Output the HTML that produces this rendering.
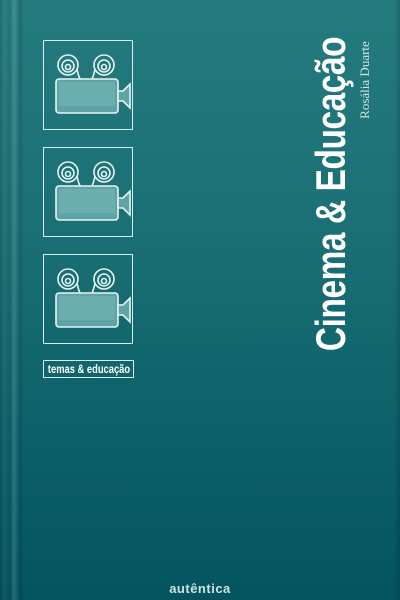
<!DOCTYPE html>
<html><head><style>
html,body{margin:0;padding:0}
body{width:400px;height:600px;position:relative;overflow:hidden;
background:linear-gradient(180deg,#247b7e 0%,#1a6f74 40%,#0b5f68 75%,#03545f 100%);
font-family:"Liberation Sans",sans-serif}
.spine{position:absolute;top:0;bottom:0;left:0;width:24px;
background:linear-gradient(90deg,rgba(0,0,0,.12) 0,rgba(255,255,255,.04) 4px,rgba(0,0,0,.05) 10px,rgba(255,255,255,.14) 14px,rgba(255,255,255,.05) 17px,rgba(0,0,0,.12) 20px,rgba(0,0,0,0) 24px)}
.redge{position:absolute;top:0;bottom:0;right:0;width:6px;background:linear-gradient(90deg,rgba(0,0,0,0),rgba(0,0,0,.15))}
.box{position:absolute;left:43px;width:88px;height:88px;border:1.5px solid #d8eeee}
.box svg{position:absolute;left:0;top:0}
.label{position:absolute;left:43px;top:360px;width:89px;height:16px;border:1.5px solid #d8eeee;}
.label span{position:absolute;left:50%;top:0;transform:translateX(-50%) scaleX(0.78);white-space:nowrap;color:#fff;font-weight:bold;font-size:12px;line-height:16px}
.title{position:absolute;left:331px;top:194px;transform:translate(-50%,-50%) rotate(-90deg) scaleX(0.795);white-space:nowrap;color:#fff;font-weight:bold;font-size:42px;letter-spacing:-0.5px}
.author{position:absolute;left:365px;top:80px;transform:translate(-50%,-50%) rotate(-90deg);white-space:nowrap;color:#cfe3e3;font-size:13px;font-family:"Liberation Serif",serif}
.pub{position:absolute;left:0;width:400px;top:581px;text-align:center;color:#cfe3e3;font-size:13px;font-weight:bold;letter-spacing:0.5px}
</style></head><body>
<div class="spine"></div><div class="redge"></div>

<div class="box" style="top:40px"><svg width="88" height="88" viewBox="0 0 88 88"><g fill="none" stroke="#e6f4f4" stroke-width="1.6">
<circle cx="24" cy="24" r="10"/><circle cx="24" cy="25" r="6"/><circle cx="24" cy="26" r="2.5"/>
<circle cx="60" cy="24" r="10"/><circle cx="60" cy="25" r="6"/><circle cx="60" cy="26" r="2.5"/>
<path d="M33 28 C34 33 35 36 36 38 M51 28 C50 33 49 36 48 38"/>
<rect x="12" y="38" width="62" height="34" rx="3" fill="#5ea4a7"/>
<path d="M74 50 L79 50 L86 43 L86 67 L79 60 L74 60 Z" fill="#5ea4a7"/>
</g><rect x="15" y="41" width="56" height="24" fill="#79b6b8" opacity=".5"/></svg></div>

<div class="box" style="top:147px"><svg width="88" height="88" viewBox="0 0 88 88"><g fill="none" stroke="#e6f4f4" stroke-width="1.6">
<circle cx="24" cy="24" r="10"/><circle cx="24" cy="25" r="6"/><circle cx="24" cy="26" r="2.5"/>
<circle cx="60" cy="24" r="10"/><circle cx="60" cy="25" r="6"/><circle cx="60" cy="26" r="2.5"/>
<path d="M33 28 C34 33 35 36 36 38 M51 28 C50 33 49 36 48 38"/>
<rect x="12" y="38" width="62" height="34" rx="3" fill="#5ea4a7"/>
<path d="M74 50 L79 50 L86 43 L86 67 L79 60 L74 60 Z" fill="#5ea4a7"/>
</g><rect x="15" y="41" width="56" height="24" fill="#79b6b8" opacity=".5"/></svg></div>

<div class="box" style="top:254px"><svg width="88" height="88" viewBox="0 0 88 88"><g fill="none" stroke="#e6f4f4" stroke-width="1.6">
<circle cx="24" cy="24" r="10"/><circle cx="24" cy="25" r="6"/><circle cx="24" cy="26" r="2.5"/>
<circle cx="60" cy="24" r="10"/><circle cx="60" cy="25" r="6"/><circle cx="60" cy="26" r="2.5"/>
<path d="M33 28 C34 33 35 36 36 38 M51 28 C50 33 49 36 48 38"/>
<rect x="12" y="38" width="62" height="34" rx="3" fill="#5ea4a7"/>
<path d="M74 50 L79 50 L86 43 L86 67 L79 60 L74 60 Z" fill="#5ea4a7"/>
</g><rect x="15" y="41" width="56" height="24" fill="#79b6b8" opacity=".5"/></svg></div>

<div class="label"><span>temas &amp; educação</span></div>

<div class="title">Cinema &amp; Educação</div>
<div class="author">Rosália Duarte</div>
<div class="pub">autêntica</div>
</body></html>
